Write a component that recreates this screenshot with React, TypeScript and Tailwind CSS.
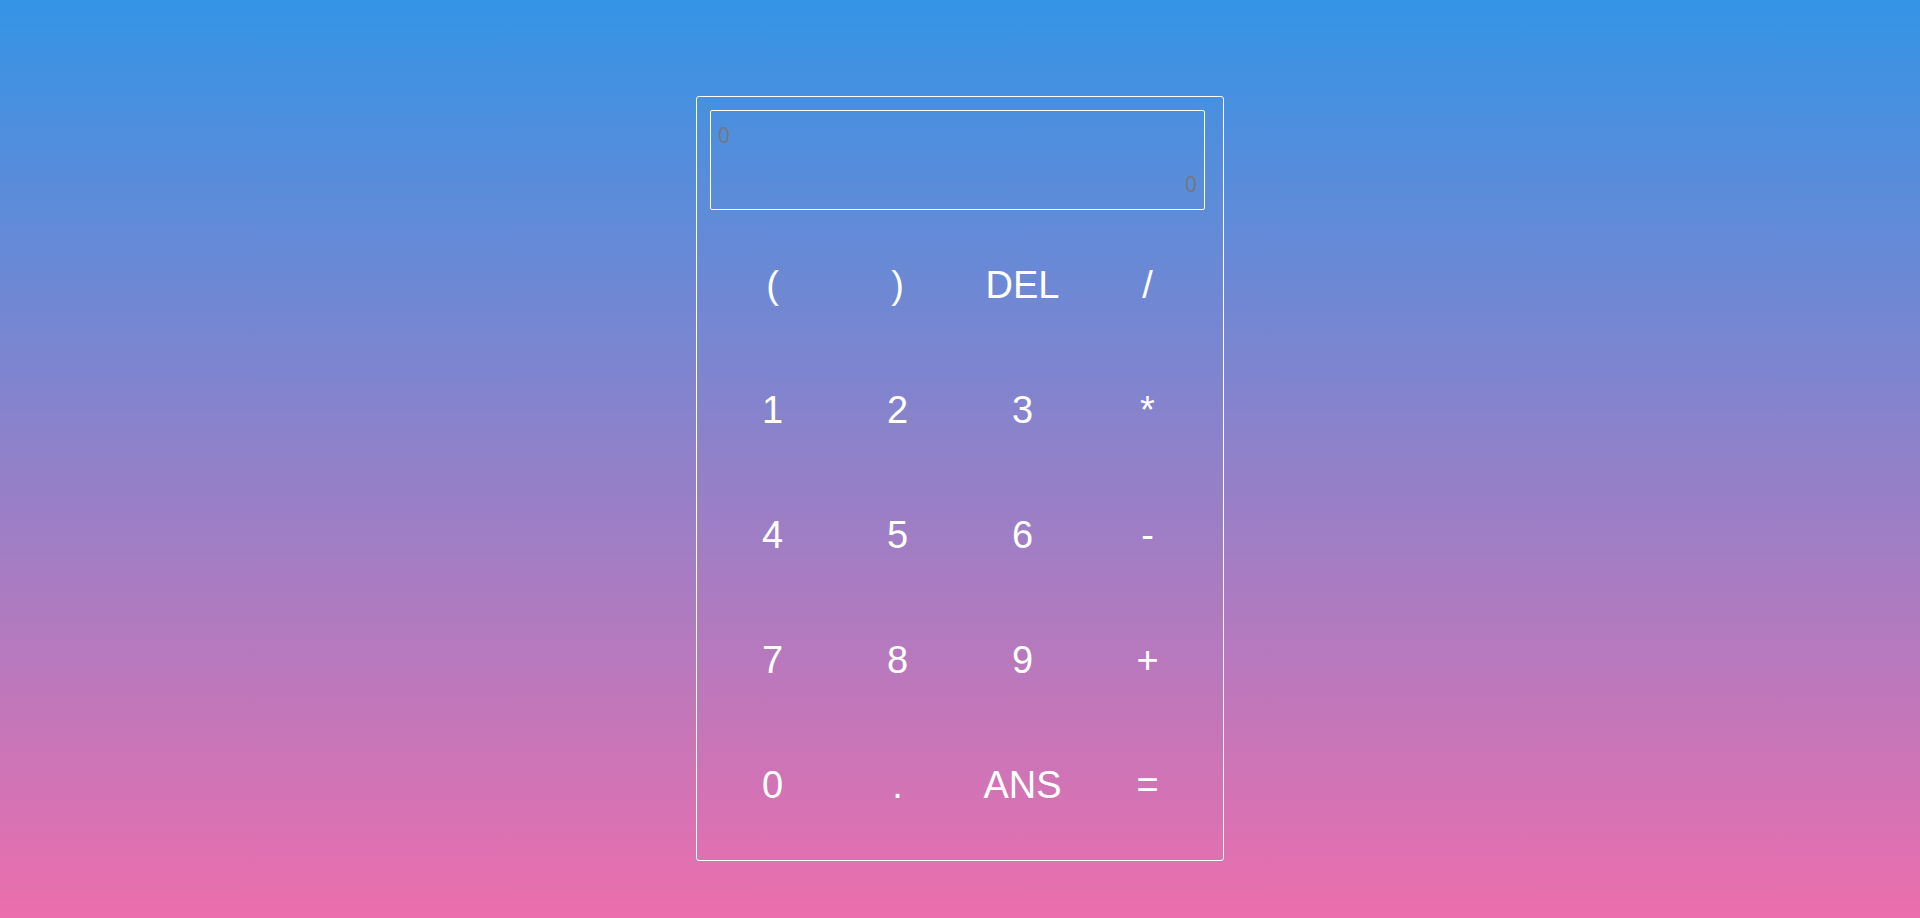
import React from "react";

const keys = [
  "(", ")", "DEL", "/",
  "1", "2", "3", "*",
  "4", "5", "6", "-",
  "7", "8", "9", "+",
  "0", ".", "ANS", "=",
];

export default function App() {
  return (
    <div className="w-full h-[918px] overflow-hidden bg-[linear-gradient(to_bottom,#3494e6,#ec6ead)] flex justify-center pt-[96px]">
      <div className="w-[528px] h-[765px] border border-white rounded-[3px] p-[13px] flex flex-col">
        <div className="w-[495px] h-[100px] border border-white rounded-[2px] px-[7px] pt-[12px] pb-[13px] flex flex-col justify-between font-['Open_Sans',sans-serif] text-[21px] leading-[24px] text-[#777777]">
          <div>0</div>
          <div className="text-right">0</div>
        </div>
        <div className="mt-[12px] grid grid-cols-4 w-[500px]">
          {keys.map((k) => (
            <button
              key={k}
              className="h-[125px] flex items-center justify-center bg-transparent text-white text-[38px] font-['Liberation_Sans',Arial,sans-serif] leading-none"
            >
              {k}
            </button>
          ))}
        </div>
      </div>
    </div>
  );
}
